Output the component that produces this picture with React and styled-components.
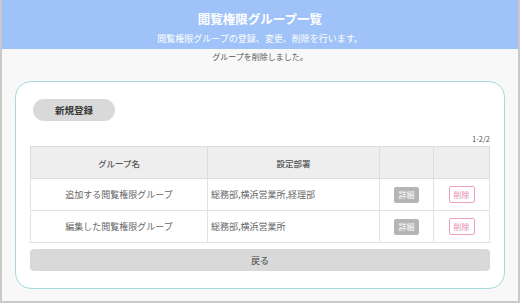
import styled, { createGlobalStyle } from "styled-components";

const GlobalStyle = createGlobalStyle`
  body {
    margin: 0;
    background: #ffffff;
    font-family: "Noto Sans CJK JP", "Noto Sans", sans-serif;
  }
`;

const Frame = styled.div`
  box-sizing: border-box;
  width: 520px;
  height: 303px;
  border: 2px solid #c9c9c9;
  border-top: none;
  background: #f8f8f8;
`;

const Header = styled.header`
  height: 49px;
  background: #9fc3f8;
  color: #ffffff;
  display: flex;
  flex-direction: column;
  align-items: center;
`;

const Title = styled.h1`
  margin: 11px 0 0;
  font-size: 12.5px;
  line-height: 16px;
  font-weight: 700;
`;

const SubTitle = styled.p`
  margin: 6px 0 0;
  font-size: 9px;
  line-height: 12px;
`;

const Message = styled.p`
  margin: 2px 0 0;
  text-align: center;
  font-size: 8px;
  line-height: 12px;
  color: #555555;
`;

const Card = styled.section`
  box-sizing: border-box;
  margin: 18px 13px 0;
  height: 208px;
  border: 1px solid #a6d9db;
  border-radius: 16px;
  background: #ffffff;
  padding: 17px 14px 0;
  display: flex;
  flex-direction: column;
`;

const PillButton = styled.button`
  box-sizing: border-box;
  width: 82px;
  height: 22px;
  margin-left: 3px;
  border: none;
  border-radius: 11px;
  background: #d9d9d9;
  color: #3a3a3a;
  font-family: inherit;
  font-size: 9.5px;
  font-weight: 700;
  padding: 0;
`;

const Count = styled.div`
  margin-top: 13px;
  text-align: right;
  font-size: 7.5px;
  line-height: 10px;
  color: #555555;
`;

const Table = styled.table`
  margin-top: 2px;
  width: 460px;
  border-collapse: collapse;
  table-layout: fixed;
  font-size: 9px;
  color: #666666;
`;

const Th = styled.th`
  height: 31px;
  padding: 0;
  background: #eeeeee;
  border: 1px solid #dddddd;
  font-size: 8.5px;
  font-weight: 500;
  color: #555555;
`;

const Td = styled.td`
  height: 31px;
  padding: 0 ${(p) => (p.$left ? "3px" : "0")};
  border: 1px solid #e2e2e2;
  text-align: ${(p) => (p.$left ? "left" : "center")};
  white-space: nowrap;
  line-height: 12px;
`;

const DetailButton = styled.button`
  box-sizing: border-box;
  width: 25px;
  height: 16px;
  padding: 0;
  border: none;
  border-radius: 2px;
  background: #b5b5b5;
  color: #ffffff;
  font-family: inherit;
  font-size: 8px;
  vertical-align: middle;
`;

const DeleteButton = styled.button`
  box-sizing: border-box;
  width: 26px;
  height: 17px;
  padding: 0;
  border: 1px solid #ee9fc0;
  border-radius: 2px;
  background: #ffffff;
  color: #e58ab0;
  font-family: inherit;
  font-size: 8px;
  vertical-align: middle;
`;

const BackButton = styled.button`
  box-sizing: border-box;
  margin-top: 6px;
  width: 460px;
  height: 22px;
  border: none;
  border-radius: 4px;
  background: #d9d9d9;
  color: #444444;
  font-family: inherit;
  font-size: 9px;
`;

const rows = [
  { name: "追加する閲覧権限グループ", depts: "総務部,横浜営業所,経理部" },
  { name: "編集した閲覧権限グループ", depts: "総務部,横浜営業所" },
];

const App = () => (
  <>
    <GlobalStyle />
    <Frame>
      <Header>
        <Title>閲覧権限グループ一覧</Title>
        <SubTitle>閲覧権限グループの登録、変更、削除を行います。</SubTitle>
      </Header>
      <Message>グループを削除しました。</Message>
      <Card>
        <PillButton>新規登録</PillButton>
        <Count>1-2/2</Count>
        <Table>
          <colgroup>
            <col style={{ width: 177 }} />
            <col style={{ width: 172 }} />
            <col style={{ width: 54 }} />
            <col />
          </colgroup>
          <thead>
            <tr>
              <Th>グループ名</Th>
              <Th>設定部署</Th>
              <Th />
              <Th />
            </tr>
          </thead>
          <tbody>
            {rows.map((row) => (
              <tr key={row.name}>
                <Td>{row.name}</Td>
                <Td $left>{row.depts}</Td>
                <Td>
                  <DetailButton>詳細</DetailButton>
                </Td>
                <Td>
                  <DeleteButton>削除</DeleteButton>
                </Td>
              </tr>
            ))}
          </tbody>
        </Table>
        <BackButton>戻る</BackButton>
      </Card>
    </Frame>
  </>
);

export default App;
